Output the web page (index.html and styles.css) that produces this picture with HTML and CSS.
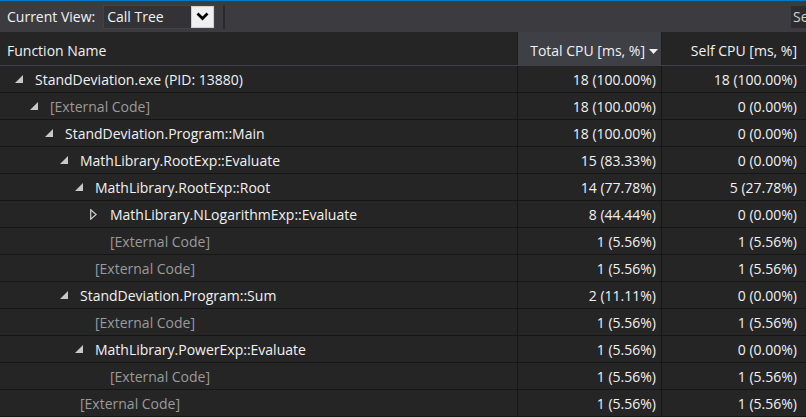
FILE: index.html
```html
<!DOCTYPE html>
<html>
<head>
<meta charset="utf-8">
<link rel="stylesheet" href="styles.css">
</head>
<body>
<div class="app">
  <div class="toolbar">
    <span class="label">Current View:</span>
    <div class="combo">
      <span class="combo-text">Call Tree</span>
      <span class="combo-btn"><svg width="13" height="9" viewBox="0 0 13 9"><polyline points="1.5,1.5 6.5,6.5 11.5,1.5" fill="none" stroke="#000" stroke-width="2.8"/></svg></span>
    </div>
    <span class="sep"></span>
    <span class="spacer"></span>
    <span class="search">Se</span>
  </div>
  <div class="grid">
    <div class="row head">
      <div class="cell name">Function Name</div>
      <div class="cell num sorted">Total CPU [ms, %]<svg class="sort" width="9" height="5" viewBox="0 0 9 5"><polygon points="0,0 9,0 4.5,5" fill="#f1f1f1"/></svg></div>
      <div class="cell num last">Self CPU [ms, %]</div>
    </div>
    <div class="row">
      <div class="cell name lv0"><svg class="exp" viewBox="0 0 8 8"><polygon points="8,0 8,8 0,8"/></svg><span>StandDeviation.exe (PID: 13880)</span></div>
      <div class="cell num">18 (100.00%)</div><div class="cell num last">18 (100.00%)</div>
    </div>
    <div class="row">
      <div class="cell name lv1"><svg class="exp" viewBox="0 0 8 8"><polygon points="8,0 8,8 0,8"/></svg><span class="ext">[External Code]</span></div>
      <div class="cell num">18 (100.00%)</div><div class="cell num last">0 (0.00%)</div>
    </div>
    <div class="row">
      <div class="cell name lv2"><svg class="exp" viewBox="0 0 8 8"><polygon points="8,0 8,8 0,8"/></svg><span>StandDeviation.Program::Main</span></div>
      <div class="cell num">18 (100.00%)</div><div class="cell num last">0 (0.00%)</div>
    </div>
    <div class="row">
      <div class="cell name lv3"><svg class="exp" viewBox="0 0 8 8"><polygon points="8,0 8,8 0,8"/></svg><span>MathLibrary.RootExp::Evaluate</span></div>
      <div class="cell num">15 (83.33%)</div><div class="cell num last">0 (0.00%)</div>
    </div>
    <div class="row">
      <div class="cell name lv4"><svg class="exp" viewBox="0 0 8 8"><polygon points="8,0 8,8 0,8"/></svg><span>MathLibrary.RootExp::Root</span></div>
      <div class="cell num">14 (77.78%)</div><div class="cell num last">5 (27.78%)</div>
    </div>
    <div class="row">
      <div class="cell name lv5"><svg class="col" viewBox="0 0 7 11"><polygon points="0.7,0.8 6.2,5.5 0.7,10.2" fill="none" stroke="#d0d0d0" stroke-width="1.2"/></svg><span>MathLibrary.NLogarithmExp::Evaluate</span></div>
      <div class="cell num">8 (44.44%)</div><div class="cell num last">0 (0.00%)</div>
    </div>
    <div class="row">
      <div class="cell name lv5"><span class="leaf"></span><span class="ext">[External Code]</span></div>
      <div class="cell num">1 (5.56%)</div><div class="cell num last">1 (5.56%)</div>
    </div>
    <div class="row">
      <div class="cell name lv4"><span class="leaf"></span><span class="ext">[External Code]</span></div>
      <div class="cell num">1 (5.56%)</div><div class="cell num last">1 (5.56%)</div>
    </div>
    <div class="row">
      <div class="cell name lv3"><svg class="exp" viewBox="0 0 8 8"><polygon points="8,0 8,8 0,8"/></svg><span>StandDeviation.Program::Sum</span></div>
      <div class="cell num">2 (11.11%)</div><div class="cell num last">0 (0.00%)</div>
    </div>
    <div class="row">
      <div class="cell name lv4"><span class="leaf"></span><span class="ext">[External Code]</span></div>
      <div class="cell num">1 (5.56%)</div><div class="cell num last">1 (5.56%)</div>
    </div>
    <div class="row">
      <div class="cell name lv4"><svg class="exp" viewBox="0 0 8 8"><polygon points="8,0 8,8 0,8"/></svg><span>MathLibrary.PowerExp::Evaluate</span></div>
      <div class="cell num">1 (5.56%)</div><div class="cell num last">0 (0.00%)</div>
    </div>
    <div class="row">
      <div class="cell name lv5"><span class="leaf"></span><span class="ext">[External Code]</span></div>
      <div class="cell num">1 (5.56%)</div><div class="cell num last">1 (5.56%)</div>
    </div>
    <div class="row">
      <div class="cell name lv3"><span class="leaf"></span><span class="ext">[External Code]</span></div>
      <div class="cell num">1 (5.56%)</div><div class="cell num last">1 (5.56%)</div>
    </div>
  </div>
</div>
</body>
</html>
```

FILE: styles.css
```css
html, body {
  margin: 0;
  padding: 0;
  background: #252526;
}
.app {
  width: 806px;
  height: 417px;
  overflow: hidden;
  font-family: "Open Sans", "Noto Sans", sans-serif;
  font-size: 14px;
  color: #f1f1f1;
  background: #252526;
}
.toolbar {
  height: 31px;
  border-top: 1px solid #007acc;
  background: #3c3c40;
  display: flex;
  align-items: center;
  box-sizing: content-box;
}
.label {
  margin-left: 7px;
  margin-right: 8px;
  flex: none;
}
.combo {
  width: 112px;
  height: 24px;
  border: 1px solid #434346;
  background: #333337;
  display: flex;
  align-items: center;
  justify-content: space-between;
  box-sizing: border-box;
  flex: none;
}
.combo-text {
  padding-left: 3px;
}
.combo-btn {
  width: 23px;
  height: 22px;
  background: #f0f0f0;
  border: 1px solid #cfcfcf;
  box-sizing: border-box;
  display: flex;
  align-items: center;
  justify-content: center;
}
.sep {
  width: 2px;
  height: 24px;
  background: #2a2a2c;
  margin-left: 8px;
}
.spacer {
  flex: 1;
}
.search {
  width: 13px;
  height: 22px;
  background: #2d2d30;
  padding-left: 2px;
  line-height: 22px;
  overflow: hidden;
  color: #d0d0d0;
  flex: none;
}
.grid {
  display: flex;
  flex-direction: column;
}
.row {
  display: grid;
  grid-template-columns: 518px 144px 1fr;
  height: 27px;
  border-bottom: 1px solid #161617;
  box-sizing: border-box;
}
.row.head {
  height: 34px;
  border-bottom: 1px solid #3f3f46;
}
.cell {
  display: flex;
  align-items: center;
  border-right: 1px solid #161617;
  white-space: nowrap;
  overflow: hidden;
}
.cell.last {
  border-right: none;
}
.cell.num {
  justify-content: flex-end;
  padding-right: 5px;
}
.cell.num.last {
  padding-right: 9px;
}
.head .cell {
  border-right: 1px solid #1e1e1e;
  padding-top: 3px;
}
.head .cell.last {
  border-right: none;
}
.head .name {
  padding-left: 7px;
}
.head .sorted {
  background: #3f3f46;
  padding-right: 3px;
}
.sort {
  margin-left: 4px;
  margin-top: 2px;
}
.exp {
  width: 8px;
  height: 8px;
  fill: #c8c8c8;
  margin-right: 12px;
  flex: none;
}
.col {
  width: 7px;
  height: 11px;
  margin-right: 13px;
  flex: none;
}
.leaf {
  display: inline-block;
  width: 8px;
  margin-right: 12px;
  flex: none;
}
.ext {
  color: #9a9a9a;
}
.lv0 { padding-left: 15px; }
.lv1 { padding-left: 30px; }
.lv2 { padding-left: 45px; }
.lv3 { padding-left: 60px; }
.lv4 { padding-left: 75px; }
.lv5 { padding-left: 90px; }
```
